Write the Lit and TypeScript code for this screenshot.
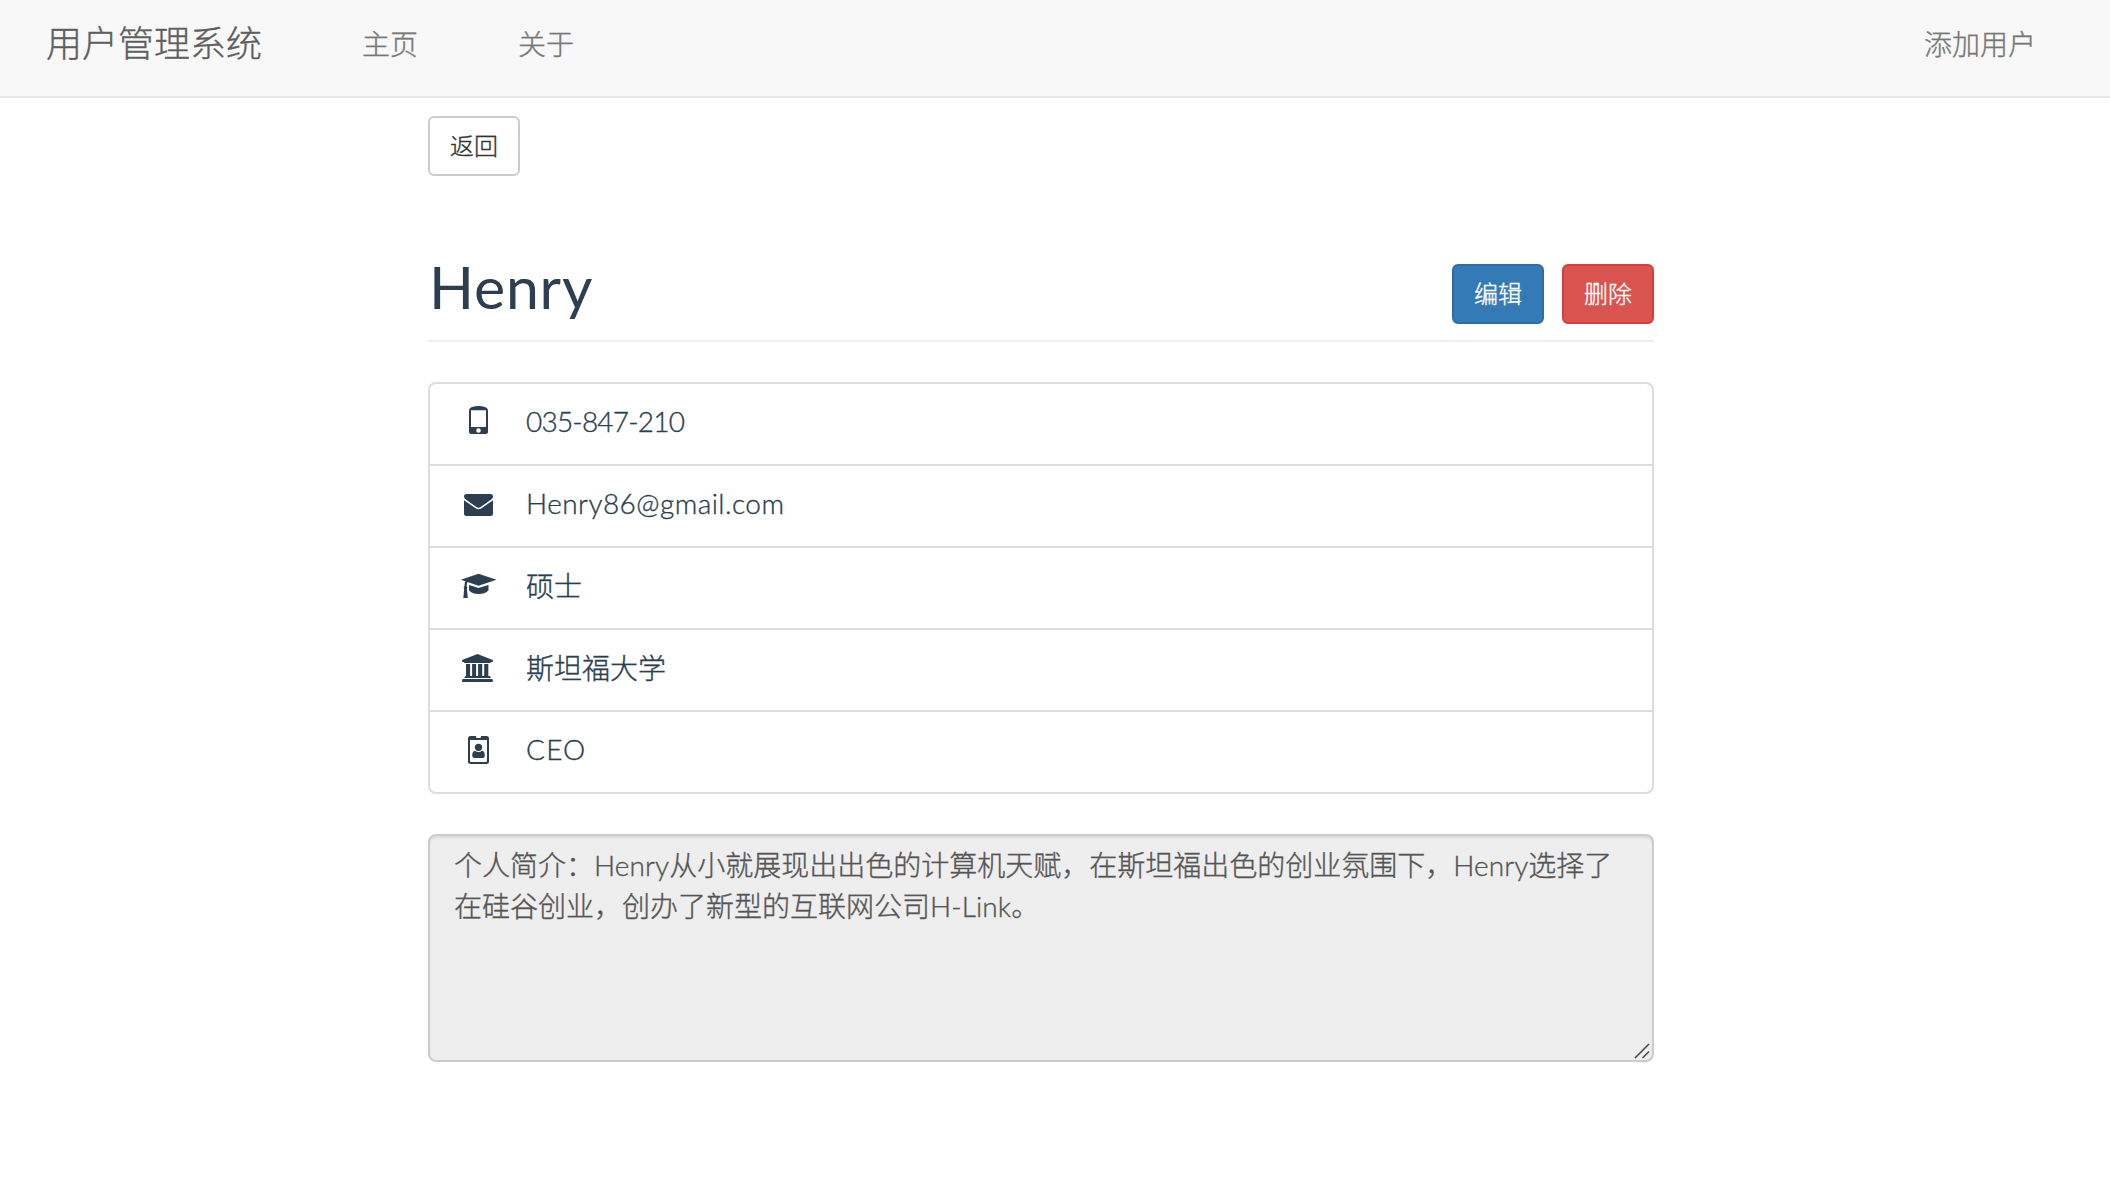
import { LitElement, html, css, svg } from "lit";
import { customElement } from "lit/decorators.js";

const icons = {
  phone: svg`<path fill-rule="evenodd" d="M12 3Q18.500 1 25 3Q28 4 28 7V28Q28 30 26 30H11Q9 30 9 28V7Q9 4 12 3ZM11 6.300V23H26V6.300ZM18.500 24.200A2.300 2.300 0 1 0 18.500 28.800A2.300 2.300 0 1 0 18.500 24.200Z"/>`,
  mail: svg`<path d="M6.500 8H30.500Q33 8 33 10.500Q33 12.500 30.500 14L21 20.800Q18.500 22.500 16 20.800L6.500 14Q4 12.500 4 10.500Q4 8 6.500 8Z"/><path d="M4 14.200L15.500 22.300Q18.500 24.300 21.500 22.300L33 14.200V27.500Q33 30 30.500 30H6.500Q4 30 4 27.500Z"/>`,
  cap: svg`<path d="M18.500 5.700L36.500 11.700L18.500 17.700L7.500 14Q6.700 15.300 6.700 18.300Q8 19.300 6.900 20.900L7.800 30H3.300L4.200 20.900Q3 19.300 4.400 18.300Q4.400 15 5.500 13.300L.8 11.700Z"/><path d="M9 17L18.500 20.100L28.500 17V22.300Q26 26 18.500 26Q11.500 26 9 22.300Z"/>`,
  bank: svg`<path d="M17.500 4L32.800 10V12H31Q31 13 29.800 13H5Q3.900 13 3.900 12H2.100V10Z"/><path d="M6 14H10.100V26H12.100V14H16.100V26H18.100V14H22.200V26H24.200V14H28.300V26H29.500Q30.800 26 30.800 28H4.400Q4.400 26 6 26ZM3.300 29H31.600Q32.800 29 32.800 30.200V32H2.100V30.200Q2.100 29 3.300 29Z"/>`,
  badge: svg`<path fill-rule="evenodd" d="M10.500 4H16V4.700Q16 6 17.200 6H19.800Q21 6 21 4.700V4H26.500Q29 4 29 6.500V29.500Q29 32 26.500 32H10.500Q8 32 8 29.500V6.500Q8 4 10.500 4ZM10 8V29Q10 30 11 30H26Q27 30 27 29V8Z"/><circle cx="18.500" cy="15.300" r="3.600"/><path d="M14.800 18.700Q18.500 21.300 22.200 18.700Q24.800 19.300 24.800 23.500Q24.800 26 22.600 26H14.400Q12.200 26 12.200 23.500Q12.200 19.300 14.800 18.700Z"/>`,
};

const rows = [
  { icon: icons.phone, text: "035-847-210", cls: "latin tel" },
  { icon: icons.mail, text: "Henry86@gmail.com", cls: "latin mail" },
  { icon: icons.cap, text: "硕士", cls: "" },
  { icon: icons.bank, text: "斯坦福大学", cls: "" },
  { icon: icons.badge, text: "CEO", cls: "latin job" },
];

@customElement("app-root")
export class AppRoot extends LitElement {
  static styles = css`
    :host {
      display: block;
      min-height: 1186px;
      background: #fff;
      color: #2c3e50;
      font: 300 28px/40px "Noto Sans CJK SC", sans-serif;
      -webkit-text-stroke: 0.35px currentColor;
    }
    * { box-sizing: border-box; }
    .nav {
      display: flex;
      height: 98px;
      padding: 0 74px 0 46px;
      background: #f8f8f8;
      border-bottom: 2px solid #e7e7e7;
      color: #777;
      line-height: 86px;
    }
    .brand { width: 316px; font-size: 36px; line-height: 82px; color: #5e5e5e; }
    .link { width: 156px; }
    .add { margin-left: auto; }
    .page { width: 1226px; margin-left: 428px; padding-top: 18px; }
    .btn {
      display: block;
      width: 92px;
      height: 60px;
      padding: 0 0 2px;
      border: 2px solid #ccc;
      border-radius: 6px;
      background: #fff;
      color: #333;
      font: inherit;
      font-size: 24px;
      line-height: 54px;
      text-align: center;
    }
    .edit { background: #337ab7; border-color: #2e6da4; color: #fff; }
    .remove { background: #d9534f; border-color: #d43f3a; color: #fff; }
    .head {
      display: flex;
      gap: 18px;
      height: 108px;
      margin-top: 58px;
      padding-top: 30px;
      border-bottom: 2px solid #eee;
    }
    .name {
      margin: 0 auto 0 1px;
      font: 400 59px/46px Lato, sans-serif;
      letter-spacing: 0.8px;
      -webkit-text-stroke: 0;
    }
    .list {
      margin: 40px 0;
      padding: 0;
      list-style: none;
      border: 2px solid #ddd;
      border-radius: 8px;
    }
    .row { display: flex; align-items: center; gap: 28px; height: 82px; padding: 0 0 2px 30px; border-bottom: 2px solid #ddd; }
    .row:last-child { height: 80px; padding-bottom: 2px; border-bottom: 0; }
    .row span { padding-bottom: 4px; }
    .icon { width: 38px; height: 40px; margin-top: 1px; fill: #2c3e50; }
    .latin { font-family: Lato, sans-serif; font-weight: 300; }
    .tel { letter-spacing: -0.8px; }
    .mail { letter-spacing: 0.45px; }
    .job { letter-spacing: 1.2px; }
    .inline { letter-spacing: 0.1px; }
    .link-name { letter-spacing: 0.1px; }
    .bio {
      position: relative;
      height: 228px;
      padding: 8px 24px;
      border: 2px solid #ccc;
      border-radius: 8px;
      background: #eee;
      color: #555;
      box-shadow: inset 0 2px 2px rgba(0, 0, 0, 0.075);
      white-space: nowrap;
    }
    .grip { position: absolute; right: 2px; bottom: 1px; width: 16px; height: 16px; stroke: #444; stroke-width: 1.5; }
  `;

  render() {
    return html`
      <nav class="nav">
        <span class="brand">用户管理系统</span>
        <span class="link">主页</span>
        <span class="link">关于</span>
        <span class="add">添加用户</span>
      </nav>
      <main class="page">
        <button class="btn">返回</button>
        <header class="head">
          <h1 class="name">Henry</h1>
          <button class="btn edit">编辑</button>
          <button class="btn remove">删除</button>
        </header>
        <ul class="list">
          ${rows.map((r) => html`<li class="row"><svg class="icon" viewBox="0 0 38 40">${r.icon}</svg><span class=${r.cls}>${r.text}</span></li>`)}
        </ul>
        <div class="bio">
          个人简介：<span class="latin inline">Henry</span>从小就展现出出色的计算机天赋，在斯坦福出色的创业氛围下，<span class="latin inline">Henry</span>选择了<br />在硅谷创业，创办了新型的互联网公司<span class="latin link-name">H-Link</span>。
          <svg class="grip" viewBox="0 0 16 16"><path d="M1 15L15 1M8.500 15L15 8.500" /></svg>
        </div>
      </main>
    `;
  }
}
